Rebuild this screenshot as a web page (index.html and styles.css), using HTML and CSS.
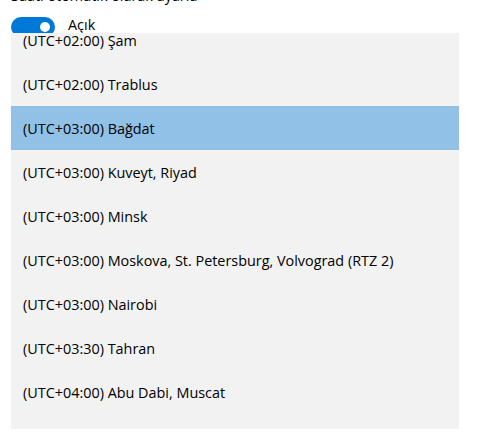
FILE: index.html
```html
<!DOCTYPE html>
<html lang="tr">
<head>
<meta charset="utf-8">
<link rel="stylesheet" href="styles.css">
</head>
<body>
<div class="page">
  <div class="setting-title">Saati otomatik olarak ayarla</div>
  <div class="toggle-row">
    <span class="toggle"><span class="knob"></span></span>
    <span class="toggle-label">Açık</span>
  </div>
</div>
<div class="dropdown">
  <ul class="list">
    <li class="item">(UTC+02:00) Şam</li>
    <li class="item">(UTC+02:00) Trablus</li>
    <li class="item selected">(UTC+03:00) Bağdat</li>
    <li class="item">(UTC+03:00) Kuveyt, Riyad</li>
    <li class="item">(UTC+03:00) Minsk</li>
    <li class="item">(UTC+03:00) Moskova, St. Petersburg, Volvograd (RTZ 2)</li>
    <li class="item">(UTC+03:00) Nairobi</li>
    <li class="item">(UTC+03:30) Tahran</li>
    <li class="item">(UTC+04:00) Abu Dabi, Muscat</li>
    <li class="item">(UTC+04:00) Bakü</li>
  </ul>
</div>
</body>
</html>
```
FILE: styles.css
```css
html, body {
  margin: 0;
  padding: 0;
  background: #fff;
  overflow: hidden;
  height: 433px;
  font-family: "Open Sans", "Noto Sans", sans-serif;
  color: #000;
}
.page {
  padding: 0 11px;
  margin-top: -14px;
}
.setting-title {
  font-size: 14.4px;
  line-height: 20px;
  height: 20px;
}
.toggle-row {
  display: flex;
  align-items: center;
  gap: 13px;
  margin-top: 9px;
}
.toggle {
  width: 44px;
  height: 20px;
  border-radius: 10px;
  background: #0078d7;
  display: flex;
  align-items: center;
  justify-content: flex-end;
  padding: 0 5px;
  box-sizing: border-box;
}
.knob {
  width: 10px;
  height: 10px;
  border-radius: 50%;
  background: #fff;
}
.toggle-label {
  font-size: 14.4px;
  line-height: 20px;
  margin-bottom: 4px;
}
.dropdown {
  position: absolute;
  left: 11px;
  top: 33px;
  width: 448px;
  height: 396px;
  background: #f2f2f2;
  overflow: hidden;
}
.list {
  list-style: none;
  margin: -15px 0 0;
  padding: 0;
}
.item {
  height: 44px;
  display: flex;
  align-items: center;
  padding-left: 12px;
  font-size: 14.4px;
  white-space: nowrap;
}
.item.selected {
  background: #91c1e7;
}
```
